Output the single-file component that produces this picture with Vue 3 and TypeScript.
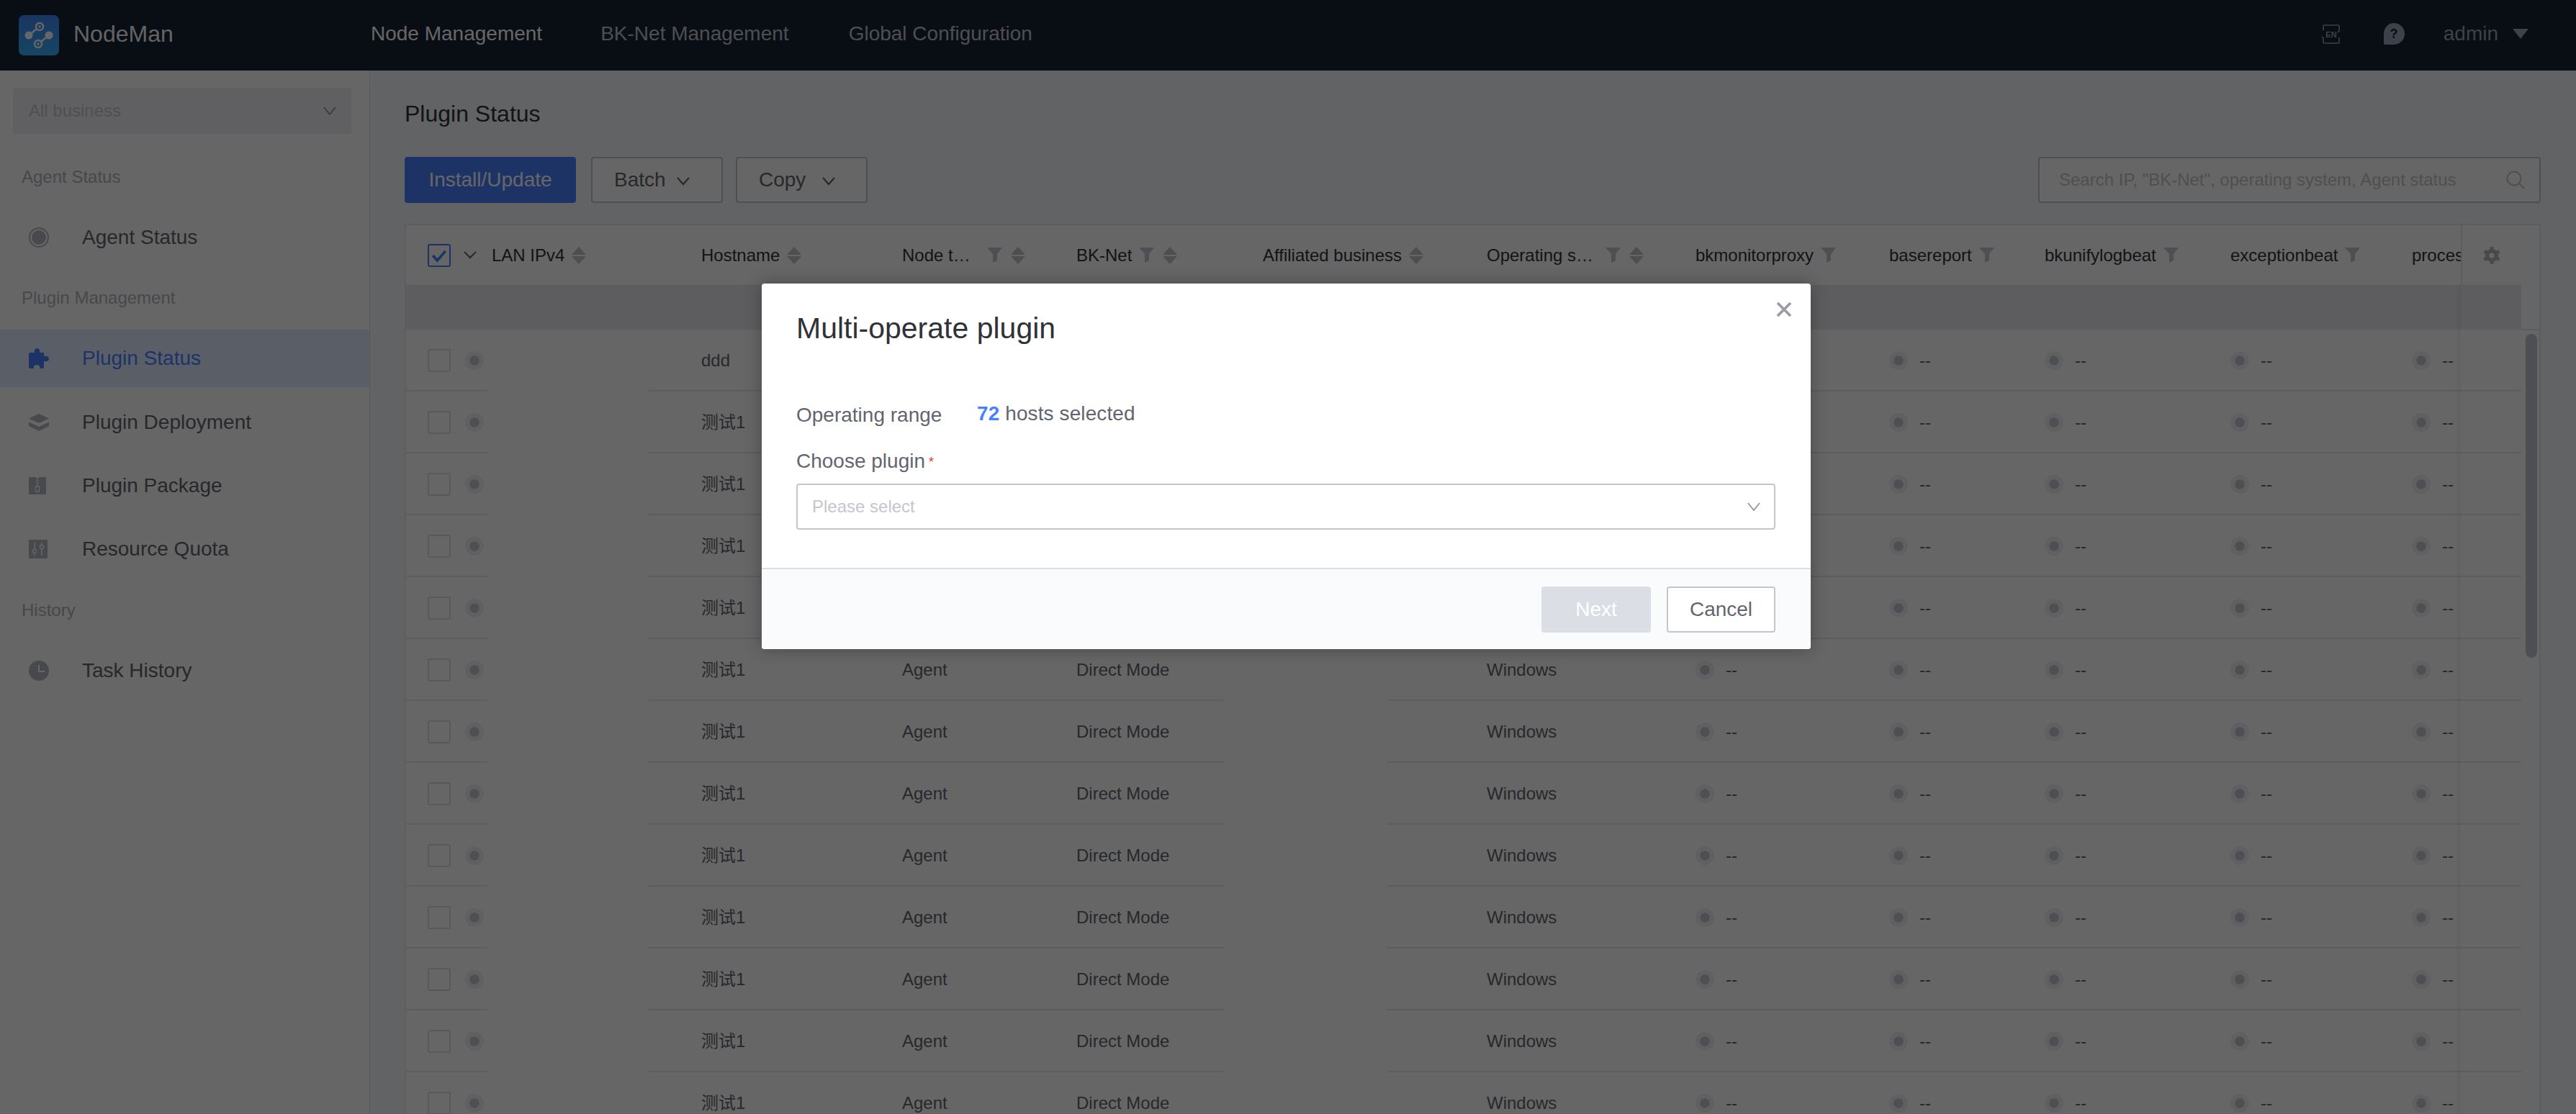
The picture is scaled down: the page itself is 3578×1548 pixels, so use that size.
<script setup lang="ts">
interface HeadCol { label: string; labelWidth?: number; filter?: boolean; sort?: boolean }

const groups = [
  { title: 'Agent Status', items: [{ icon: 'agent', label: 'Agent Status' }] },
  {
    title: 'Plugin Management',
    items: [
      { icon: 'puzzle', label: 'Plugin Status', active: true },
      { icon: 'layers', label: 'Plugin Deployment' },
      { icon: 'zip', label: 'Plugin Package' },
      { icon: 'sliders', label: 'Resource Quota' },
    ],
  },
  { title: 'History', items: [{ icon: 'clock', label: 'Task History' }] },
]

const headCols: HeadCol[] = [
  { label: 'LAN IPv4', sort: true },
  { label: 'Hostname', sort: true },
  { label: 'Node t…', labelWidth: 108, filter: true, sort: true },
  { label: 'BK-Net', filter: true, sort: true },
  { label: 'Affiliated business', sort: true },
  { label: 'Operating s…', labelWidth: 155, filter: true, sort: true },
  { label: 'bkmonitorproxy', filter: true },
  { label: 'basereport', filter: true },
  { label: 'bkunifylogbeat', filter: true },
  { label: 'exceptionbeat', filter: true },
  { label: 'processbeat', filter: true },
]

const rows = Array.from({ length: 13 }, (_, i) => (i === 0 ? 'ddd' : '测试1'))
const gearTeeth = [0, 60, 120, 180, 240, 300]
</script>

<template>
  <div class="page">
    <header class="nav">
      <div class="brand">
        <svg class="logo" viewBox="0 0 56 56">
          <defs>
            <linearGradient id="logoFill" x1="0" y1="0" x2="0" y2="1">
              <stop offset="0" stop-color="#4186f5" />
              <stop offset="1" stop-color="#37aef5" />
            </linearGradient>
          </defs>
          <rect width="56" height="56" rx="7" fill="url(#logoFill)" />
          <path d="M14 28 L29 16 M42 28 L27 40" stroke="#fff" stroke-width="2.5" />
          <circle cx="14" cy="28" r="5.5" fill="#fff" />
          <circle cx="42" cy="28" r="5.5" fill="#fff" />
          <circle cx="29" cy="16" r="5" fill="#3f8cf0" stroke="#fff" stroke-width="2.5" />
          <circle cx="27" cy="40" r="5" fill="#3a9ce6" stroke="#fff" stroke-width="2.5" />
          <circle cx="29" cy="16" r="1.8" fill="#fff" />
          <circle cx="27" cy="40" r="1.8" fill="#fff" />
        </svg>
        <span class="brand-name">NodeMan</span>
      </div>
      <nav class="nav-links">
        <span class="nav-link current">Node Management</span>
        <span class="nav-link">BK-Net Management</span>
        <span class="nav-link">Global Configuration</span>
      </nav>
      <div class="nav-right">
        <svg class="nav-en" viewBox="0 0 26 27">
          <path d="M3 8 V2 Q3 1 4 1 H24 Q25 1 25 2 V9 L23 11 M25 18 V25 Q25 26 24 26 H4 Q3 26 3 25 V19 L1 17" fill="none" stroke="#96a2b9" stroke-width="1.6" />
          <text x="14" y="18" text-anchor="middle" class="en-text">EN</text>
        </svg>
        <svg class="nav-help" viewBox="0 0 30 31">
          <path d="M15 0 A15 15 0 0 1 15 30 H3 Q1 30 1 28 V15 A14 15 0 0 1 15 0Z" fill="#96a2b9" />
          <text x="15" y="21" text-anchor="middle" class="help-text">?</text>
        </svg>
        <span class="nav-user">admin</span>
        <svg class="nav-caret" viewBox="0 0 22 14"><path d="M0 0 H22 L11 14Z" fill="#96a2b9" /></svg>
      </div>
    </header>

    <div class="main">
      <aside class="side">
        <div class="biz-select">
          <span>All business</span>
          <svg class="chev-small" viewBox="0 0 20 12"><path d="M2 1 L10 11 L18 1" fill="none" stroke="#979ba5" stroke-width="2" /></svg>
        </div>
        <section v-for="g in groups" :key="g.title" class="group">
          <div class="group-title">{{ g.title }}</div>
          <div v-for="it in g.items" :key="it.label" class="side-item" :class="{ active: it.active }">
            <span class="side-icon">
              <svg v-if="it.icon === 'agent'" width="28" height="28" viewBox="0 0 28 28">
                <circle cx="14" cy="14" r="13" fill="none" stroke="currentColor" stroke-width="2" />
                <circle cx="14" cy="14" r="10" fill="currentColor" />
              </svg>
              <svg v-else-if="it.icon === 'puzzle'" width="28" height="28" viewBox="0 0 28 28">
                <path fill="currentColor" d="M2 6 H8 C7 2 9 0 11.5 0 C14 0 16 2 15 6 H21 V11 C25 10 28 12 28 14.5 C28 17 25 19 21 18 V26 Q21 28 19 28 H15 C16 25 14 23 11 23 C8 23 6 25 7 28 H2 Q0 28 0 26 V8 Q0 6 2 6Z" />
              </svg>
              <svg v-else-if="it.icon === 'layers'" width="28" height="24" viewBox="0 0 28 24">
                <path fill="currentColor" d="M14 0 L28 6.5 L14 13 L0 6.5Z M0 11.5 L14 18 L28 11.5 V17 L14 24 L0 17Z" />
              </svg>
              <svg v-else-if="it.icon === 'zip'" width="24" height="24" viewBox="0 0 24 24">
                <rect width="24" height="24" rx="1" fill="currentColor" />
                <path d="M12 0 V12" stroke="#fff" stroke-width="3" stroke-dasharray="2 1.5" />
                <rect x="9.5" y="13" width="5" height="7" fill="none" stroke="#fff" stroke-width="1.3" />
              </svg>
              <svg v-else-if="it.icon === 'sliders'" width="26" height="26" viewBox="0 0 26 26">
                <rect width="26" height="26" rx="1" fill="currentColor" />
                <path d="M8 4 V22 M18 4 V22" stroke="#fff" stroke-width="1.4" />
                <circle cx="8" cy="16" r="2.6" fill="#b8bac2" stroke="#fff" stroke-width="1.4" />
                <circle cx="18" cy="10" r="2.6" fill="#b8bac2" stroke="#fff" stroke-width="1.4" />
              </svg>
              <svg v-else width="28" height="28" viewBox="0 0 28 28">
                <circle cx="14" cy="14" r="14" fill="currentColor" />
                <path d="M14 6 V15 H22" fill="none" stroke="#fff" stroke-width="2" />
              </svg>
            </span>
            <span>{{ it.label }}</span>
          </div>
        </section>
      </aside>

      <main class="content">
        <h1 class="page-title">Plugin Status</h1>
        <div class="toolbar">
          <button class="btn primary">Install/Update</button>
          <button class="btn drop">
            <span>Batch</span>
            <svg class="chev" viewBox="0 0 20 12"><path d="M2 1 L10 10 L18 1" fill="none" stroke="#63656e" stroke-width="2.2" /></svg>
          </button>
          <button class="btn drop wide-gap">
            <span>Copy</span>
            <svg class="chev" viewBox="0 0 20 12"><path d="M2 1 L10 10 L18 1" fill="none" stroke="#63656e" stroke-width="2.2" /></svg>
          </button>
          <div class="search">
            <span>Search IP, "BK-Net", operating system, Agent status</span>
            <svg class="search-icon" viewBox="0 0 26 26">
              <circle cx="11" cy="11" r="9.5" fill="none" stroke="#c4c6cc" stroke-width="2" />
              <path d="M18 18 L25 25" stroke="#c4c6cc" stroke-width="2" />
            </svg>
          </div>
        </div>

        <div class="table">
          <div class="grid head">
            <div class="sel-cell">
              <span class="check on">
                <svg viewBox="0 0 32 32"><path d="M6 16 L13 24 L26 9" fill="none" stroke="#3a84ff" stroke-width="4" /></svg>
              </span>
              <svg class="head-chev" viewBox="0 0 18 11"><path d="M1 1 L9 9 L17 1" fill="none" stroke="#63656e" stroke-width="2" /></svg>
            </div>
            <div v-for="c in headCols" :key="c.label" class="head-cell">
              <span class="head-label" :style="c.labelWidth ? { width: c.labelWidth + 'px' } : undefined">{{ c.label }}</span>
              <svg v-if="c.filter" class="filter" viewBox="0 0 21 21">
                <path d="M0 0 H21 L14 9 V18 L8 21 V9Z" fill="#c4c6cc" />
              </svg>
              <svg v-if="c.sort" class="sort" viewBox="0 0 20 24">
                <path d="M10 0 L20 11 H0Z M0 13 H20 L10 24Z" fill="#c0c2c9" />
              </svg>
            </div>
          </div>
          <div class="empty-band"></div>
          <div v-for="(name, i) in rows" :key="i" class="grid row">
            <div class="sel-cell">
              <span class="check"></span>
              <span class="dot"></span>
            </div>
            <div></div>
            <div>{{ name }}</div>
            <div>Agent</div>
            <div>Direct Mode</div>
            <div></div>
            <div>Windows</div>
            <div v-for="n in 5" :key="n" class="plugin-cell">
              <span class="dot"></span>
              <span>--</span>
            </div>
          </div>

          <div class="settings-head">
            <svg viewBox="0 0 24 24" width="24" height="24">
              <circle cx="12" cy="12" r="9" fill="#b4b6bd" />
              <rect v-for="a in gearTeeth" :key="a" x="9.5" y="0" width="5" height="6" rx="1" fill="#b4b6bd" :transform="`rotate(${a} 12 12)`" />
              <circle cx="12" cy="12" r="3.6" fill="#fff" />
            </svg>
          </div>
          <div class="settings-col"></div>
          <div class="scroll-track"><div class="scroll-thumb"></div></div>
        </div>
      </main>
    </div>

    <div class="mask">
      <div class="dialog">
        <svg class="close" viewBox="0 0 22 20">
          <path d="M2 1 L20 19 M20 1 L2 19" stroke="#979ba5" stroke-width="3.6" />
        </svg>
        <div class="dialog-title">Multi-operate plugin</div>
        <div class="range-row">
          <span class="range-label">Operating range</span>
          <span class="range-value"><b>72</b> hosts selected</span>
        </div>
        <div class="plugin-label">Choose plugin<span class="req">*</span></div>
        <div class="plugin-select">
          <span>Please select</span>
          <svg class="chev-small" viewBox="0 0 20 12"><path d="M2 1 L10 11 L18 1" fill="none" stroke="#979ba5" stroke-width="2" /></svg>
        </div>
        <div class="dialog-foot">
          <button class="btn next">Next</button>
          <button class="btn cancel">Cancel</button>
        </div>
      </div>
    </div>
  </div>
</template>

<style>
html, body { margin: 0; padding: 0; background: #fff; }
</style>

<style scoped>
.page {
  position: relative;
  width: 3578px;
  height: 1548px;
  overflow: hidden;
  display: flex;
  flex-direction: column;
  font-family: "Liberation Sans", "Noto Sans CJK SC", sans-serif;
  color: #63656e;
  background: #f5f7fa;
}

.nav {
  height: 98px;
  flex: none;
  box-sizing: border-box;
  padding-bottom: 4px;
  display: flex;
  align-items: center;
  background: #182132;
}
.brand {
  display: flex;
  align-items: center;
  gap: 20px;
  width: 515px;
  padding-left: 26px;
  box-sizing: border-box;
}
.logo { width: 56px; height: 56px; display: block; margin-top: 4px; }
.brand-name { font-size: 32px; color: #f5f7fa; }
.nav-links { display: flex; }
.nav-link { font-size: 28px; color: #c0c4cc; margin-right: 81px; }
.nav-link:nth-child(2) { margin-right: 83px; }
.nav-link.current { color: #fff; }
.nav-right {
  margin-left: auto;
  display: flex;
  align-items: center;
  padding-right: 66px;
}
.nav-en { width: 26px; height: 27px; margin-right: 60px; }
.en-text { font-size: 11px; font-weight: 700; fill: #96a2b9; font-family: "Liberation Sans", sans-serif; }
.nav-help { width: 30px; height: 31px; margin-right: 54px; }
.help-text { font-size: 18px; font-weight: 700; fill: #182132; font-family: "Liberation Sans", sans-serif; }
.nav-user { font-size: 28px; color: #96a2b9; margin-right: 20px; }
.nav-caret { width: 22px; height: 14px; }

.main { flex: 1; display: flex; min-height: 0; }
.side {
  width: 514px;
  flex: none;
  box-sizing: border-box;
  background: #fff;
  border-right: 1px solid #dcdee5;
  padding-top: 24px;
}
.biz-select {
  margin: 0 25px 24px 18px;
  height: 64px;
  padding: 0 20px 0 22px;
  background: #f0f1f5;
  border-radius: 4px;
  display: flex;
  align-items: center;
  justify-content: space-between;
  font-size: 24px;
  color: #c4c6cc;
}
.chev-small { width: 20px; height: 12px; display: block; }
.group-title {
  height: 72px;
  line-height: 72px;
  margin-bottom: 8px;
  padding-left: 30px;
  font-size: 24px;
  color: #b0b3bb;
}
.side-item {
  height: 80px;
  margin-bottom: 8.33px;
  display: flex;
  align-items: center;
  font-size: 28px;
  color: #63656e;
}
.side-item.active { background: #e1ecff; color: #4a80ff; }
.side-icon {
  width: 114px;
  padding-left: 40px;
  box-sizing: border-box;
  display: flex;
  color: #b4b6bd;
}
.side-item.active .side-icon { color: #4a80ff; }

.content { flex: 1; min-width: 0; padding: 40px 49px 0 48px; }
.page-title {
  margin: 0;
  font-size: 32px;
  line-height: 40px;
  font-weight: 400;
  color: #313238;
}
.toolbar { display: flex; margin-top: 40px; height: 64px; gap: 21px; }
.btn {
  height: 64px;
  box-sizing: border-box;
  border: 2px solid #c4c6cc;
  border-radius: 4px;
  background: #fff;
  color: #63656e;
  font: 28px "Liberation Sans", sans-serif;
  padding: 0;
}
.btn.primary { width: 238px; background: #4a80ff; border-color: #4a80ff; color: #fff; }
.btn.drop {
  width: 183px;
  display: flex;
  align-items: center;
  gap: 14px;
  padding-left: 30px;
}
.btn.wide-gap { gap: 22px; margin-left: -3px; }
.chev { width: 20px; height: 12px; margin-top: 4px; }
.search {
  margin-left: auto;
  width: 698px;
  box-sizing: border-box;
  border: 2px solid #c4c6cc;
  border-radius: 4px;
  display: flex;
  align-items: center;
  justify-content: space-between;
  padding: 0 20px 0 27px;
  font-size: 24px;
  color: #c4c6cc;
  background: #fff;
}
.search-icon { width: 26px; height: 26px; }

.table {
  position: relative;
  margin-top: 29px;
  height: 1300px;
  box-sizing: border-box;
  border: 2px solid #e8e9ee;
  background: #fff;
  overflow: hidden;
  font-size: 24px;
  line-height: 28px;
  color: #63656e;
}
.grid {
  display: grid;
  grid-template-columns: 119px 291px 279px 242px 259px 311px 290px 269px 216px 258px 252px 152px;
  align-items: center;
  width: 2938px;
}
.head { height: 83px; color: #313238; }
.sel-cell {
  display: flex;
  align-items: center;
  padding-left: 30px;
}
.head .sel-cell { gap: 18px; }
.row .sel-cell { gap: 20px; }
.check {
  width: 32px;
  height: 32px;
  flex: none;
  box-sizing: border-box;
  border: 2px solid #dcdee5;
  border-radius: 3px;
  background: #fff;
  display: block;
}
.check.on { border-color: #4a80ff; }
.check.on svg { display: block; width: 28px; height: 28px; }
.head-chev { width: 18px; height: 11px; flex: none; }
.head-cell { display: flex; align-items: center; gap: 10px; white-space: nowrap; }
.head-label { display: block; flex: none; }
.filter { width: 21px; height: 21px; flex: none; }
.sort { width: 20px; height: 24px; flex: none; }
.filter + .sort { margin-left: 2px; }
.empty-band { height: 62px; width: 2938px; background: #e8e9ee; }
.row {
  height: 86px;
  background-image: linear-gradient(90deg, #e8e9ee 0 113px, transparent 113px 336px, #e8e9ee 336px 1136px, transparent 1136px 1362px, #e8e9ee 1362px);
  background-size: 100% 2px;
  background-position: bottom;
  background-repeat: no-repeat;
}
.dot {
  width: 14px;
  height: 14px;
  flex: none;
  box-sizing: content-box;
  border: 6px solid #f0f1f5;
  border-radius: 50%;
  background: #c4c6cc;
  background-clip: padding-box;
  display: block;
}
.plugin-cell { display: flex; align-items: center; gap: 16px; }

.settings-head {
  position: absolute;
  top: 0;
  left: 2854px;
  right: 0;
  height: 83px;
  box-sizing: border-box;
  border-left: 2px solid #e8e9ee;
  background: #fff;
  display: flex;
  align-items: center;
  padding-left: 29px;
}
.settings-col {
  position: absolute;
  top: 83px;
  left: 2854px;
  width: 84px;
  bottom: 0;
  box-shadow: -4px 0 8px rgba(0, 0, 0, 0.05);
}
.scroll-track {
  position: absolute;
  top: 144px;
  left: 2938px;
  right: 0;
  bottom: 0;
  border-top: 2px solid #e8e9ee;
  background: #fff;
}
.scroll-thumb {
  position: absolute;
  top: 5px;
  left: 6px;
  width: 16px;
  height: 450px;
  border-radius: 8px;
  background: #c4c6cc;
}

.mask {
  position: absolute;
  inset: 0;
  background: rgba(0, 0, 0, 0.6);
}
.dialog {
  position: absolute;
  left: 1058px;
  top: 394px;
  width: 1457px;
  height: 508px;
  display: flex;
  flex-direction: column;
  background: #fff;
  border-radius: 4px;
  overflow: hidden;
  box-shadow: 0 0 24px rgba(0, 0, 0, 0.3);
  color: #63656e;
}
.close { position: absolute; left: 1409px; top: 26px; width: 22px; height: 20px; }
.dialog-title {
  margin: 38px 48px 0;
  font-size: 41px;
  line-height: 48px;
  color: #313238;
}
.range-row {
  display: flex;
  margin: 77px 48px 0;
  font-size: 28px;
  line-height: 40px;
}
.range-label { width: 251px; }
.range-value { position: relative; top: -2px; letter-spacing: 0.1px; }
.range-value b { color: #4a80ff; font-weight: 700; }
.plugin-label {
  margin: 24px 48px 0;
  font-size: 28px;
  line-height: 40px;
}
.req { color: #ea3636; font-size: 18px; margin-left: 5px; vertical-align: 2px; }
.plugin-select {
  margin: 10px 49px 0 48px;
  height: 64px;
  box-sizing: border-box;
  border: 2px solid #c4c6cc;
  border-radius: 4px;
  display: flex;
  align-items: center;
  justify-content: space-between;
  padding: 0 18px 0 20px;
  font-size: 24px;
  color: #c4c6cc;
}
.dialog-foot {
  margin-top: 53px;
  flex: 1;
  display: flex;
  justify-content: flex-end;
  gap: 22px;
  padding: 24px 49px 0 0;
  background: #fafbfd;
  border-top: 2px solid #dcdee5;
}
.btn.next { width: 152px; background: #dcdee5; border-color: #dcdee5; color: #fff; }
.btn.cancel { width: 151px; }
</style>
